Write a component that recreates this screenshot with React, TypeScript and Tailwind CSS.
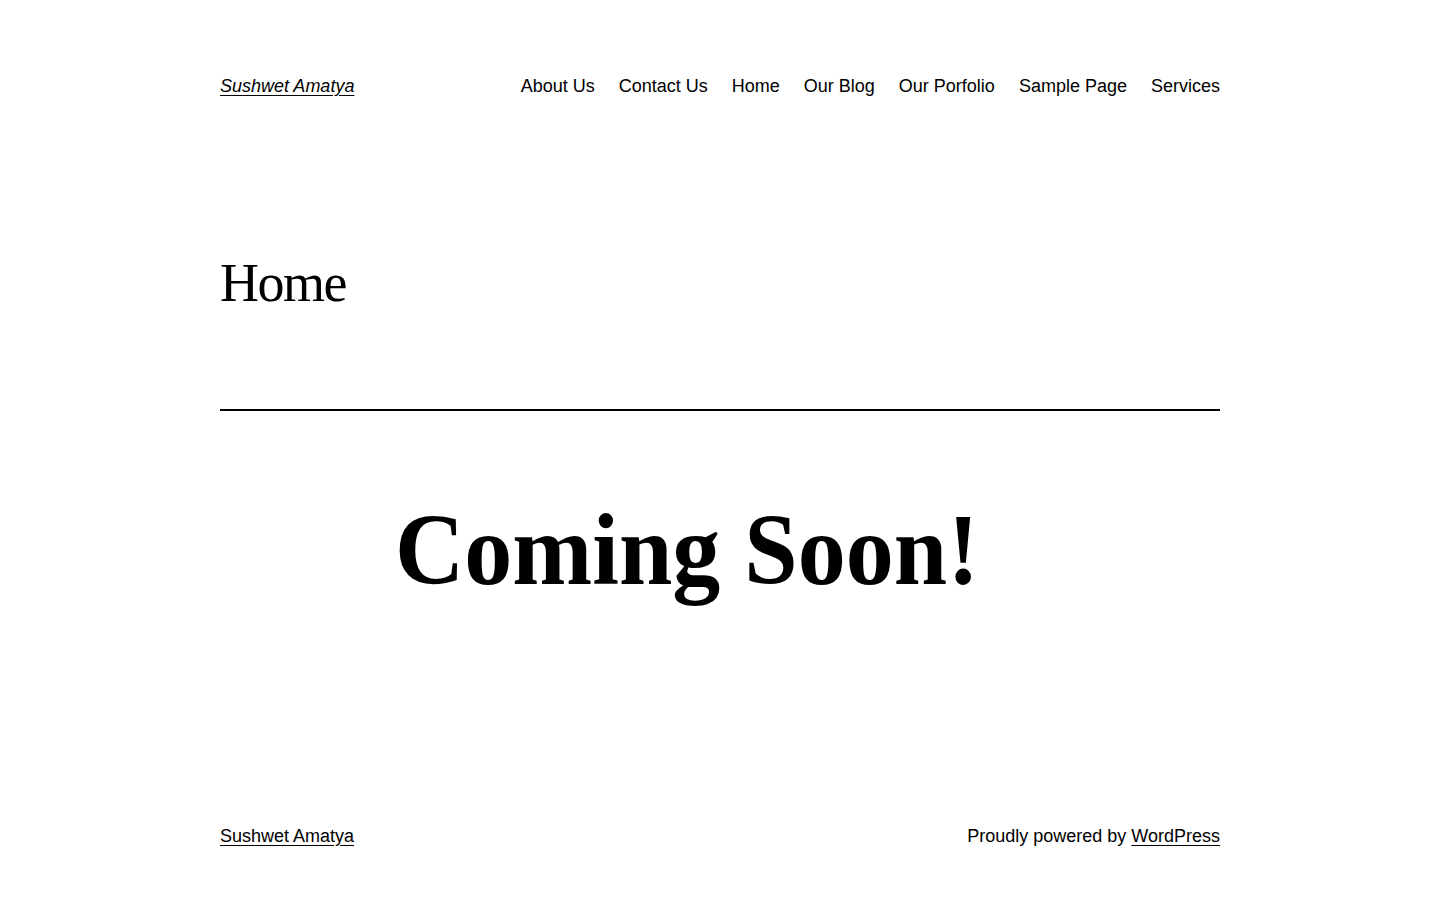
export default function App() {
  const nav = ["About Us", "Contact Us", "Home", "Our Blog", "Our Porfolio", "Sample Page", "Services"];
  return (
    <div className="min-h-[914px] bg-white text-black" style={{ fontFamily: '"Liberation Sans", Arial, sans-serif' }}>
      <div className="mx-auto flex w-[1000px] flex-col">
        <header className="flex h-[172px] items-center justify-between">
          <a href="#" className="text-[18px] italic underline underline-offset-[3px]">Sushwet Amatya</a>
          <nav className="flex gap-6 text-[18px]">
            {nav.map((n) => (
              <a key={n} href="#">{n}</a>
            ))}
          </nav>
        </header>
        <h1 className="mt-[84px] text-[54px] font-light leading-none tracking-[-1.5px] [font-family:'Liberation_Serif',serif]">Home</h1>
        <hr className="mt-[99px] border-t-2 border-black" />
        <div className="ml-[175px] mt-[94px] origin-bottom scale-y-[1.06] text-[96px] font-black leading-none [font-family:'Liberation_Serif',serif]">Coming Soon!</div>
        <footer className="mt-[222px] flex items-center justify-between text-[18px]">
          <a href="#" className="underline underline-offset-[3px]">Sushwet Amatya</a>
          <p>Proudly powered by <a href="#" className="underline underline-offset-[3px]">WordPress</a></p>
        </footer>
      </div>
    </div>
  );
}
